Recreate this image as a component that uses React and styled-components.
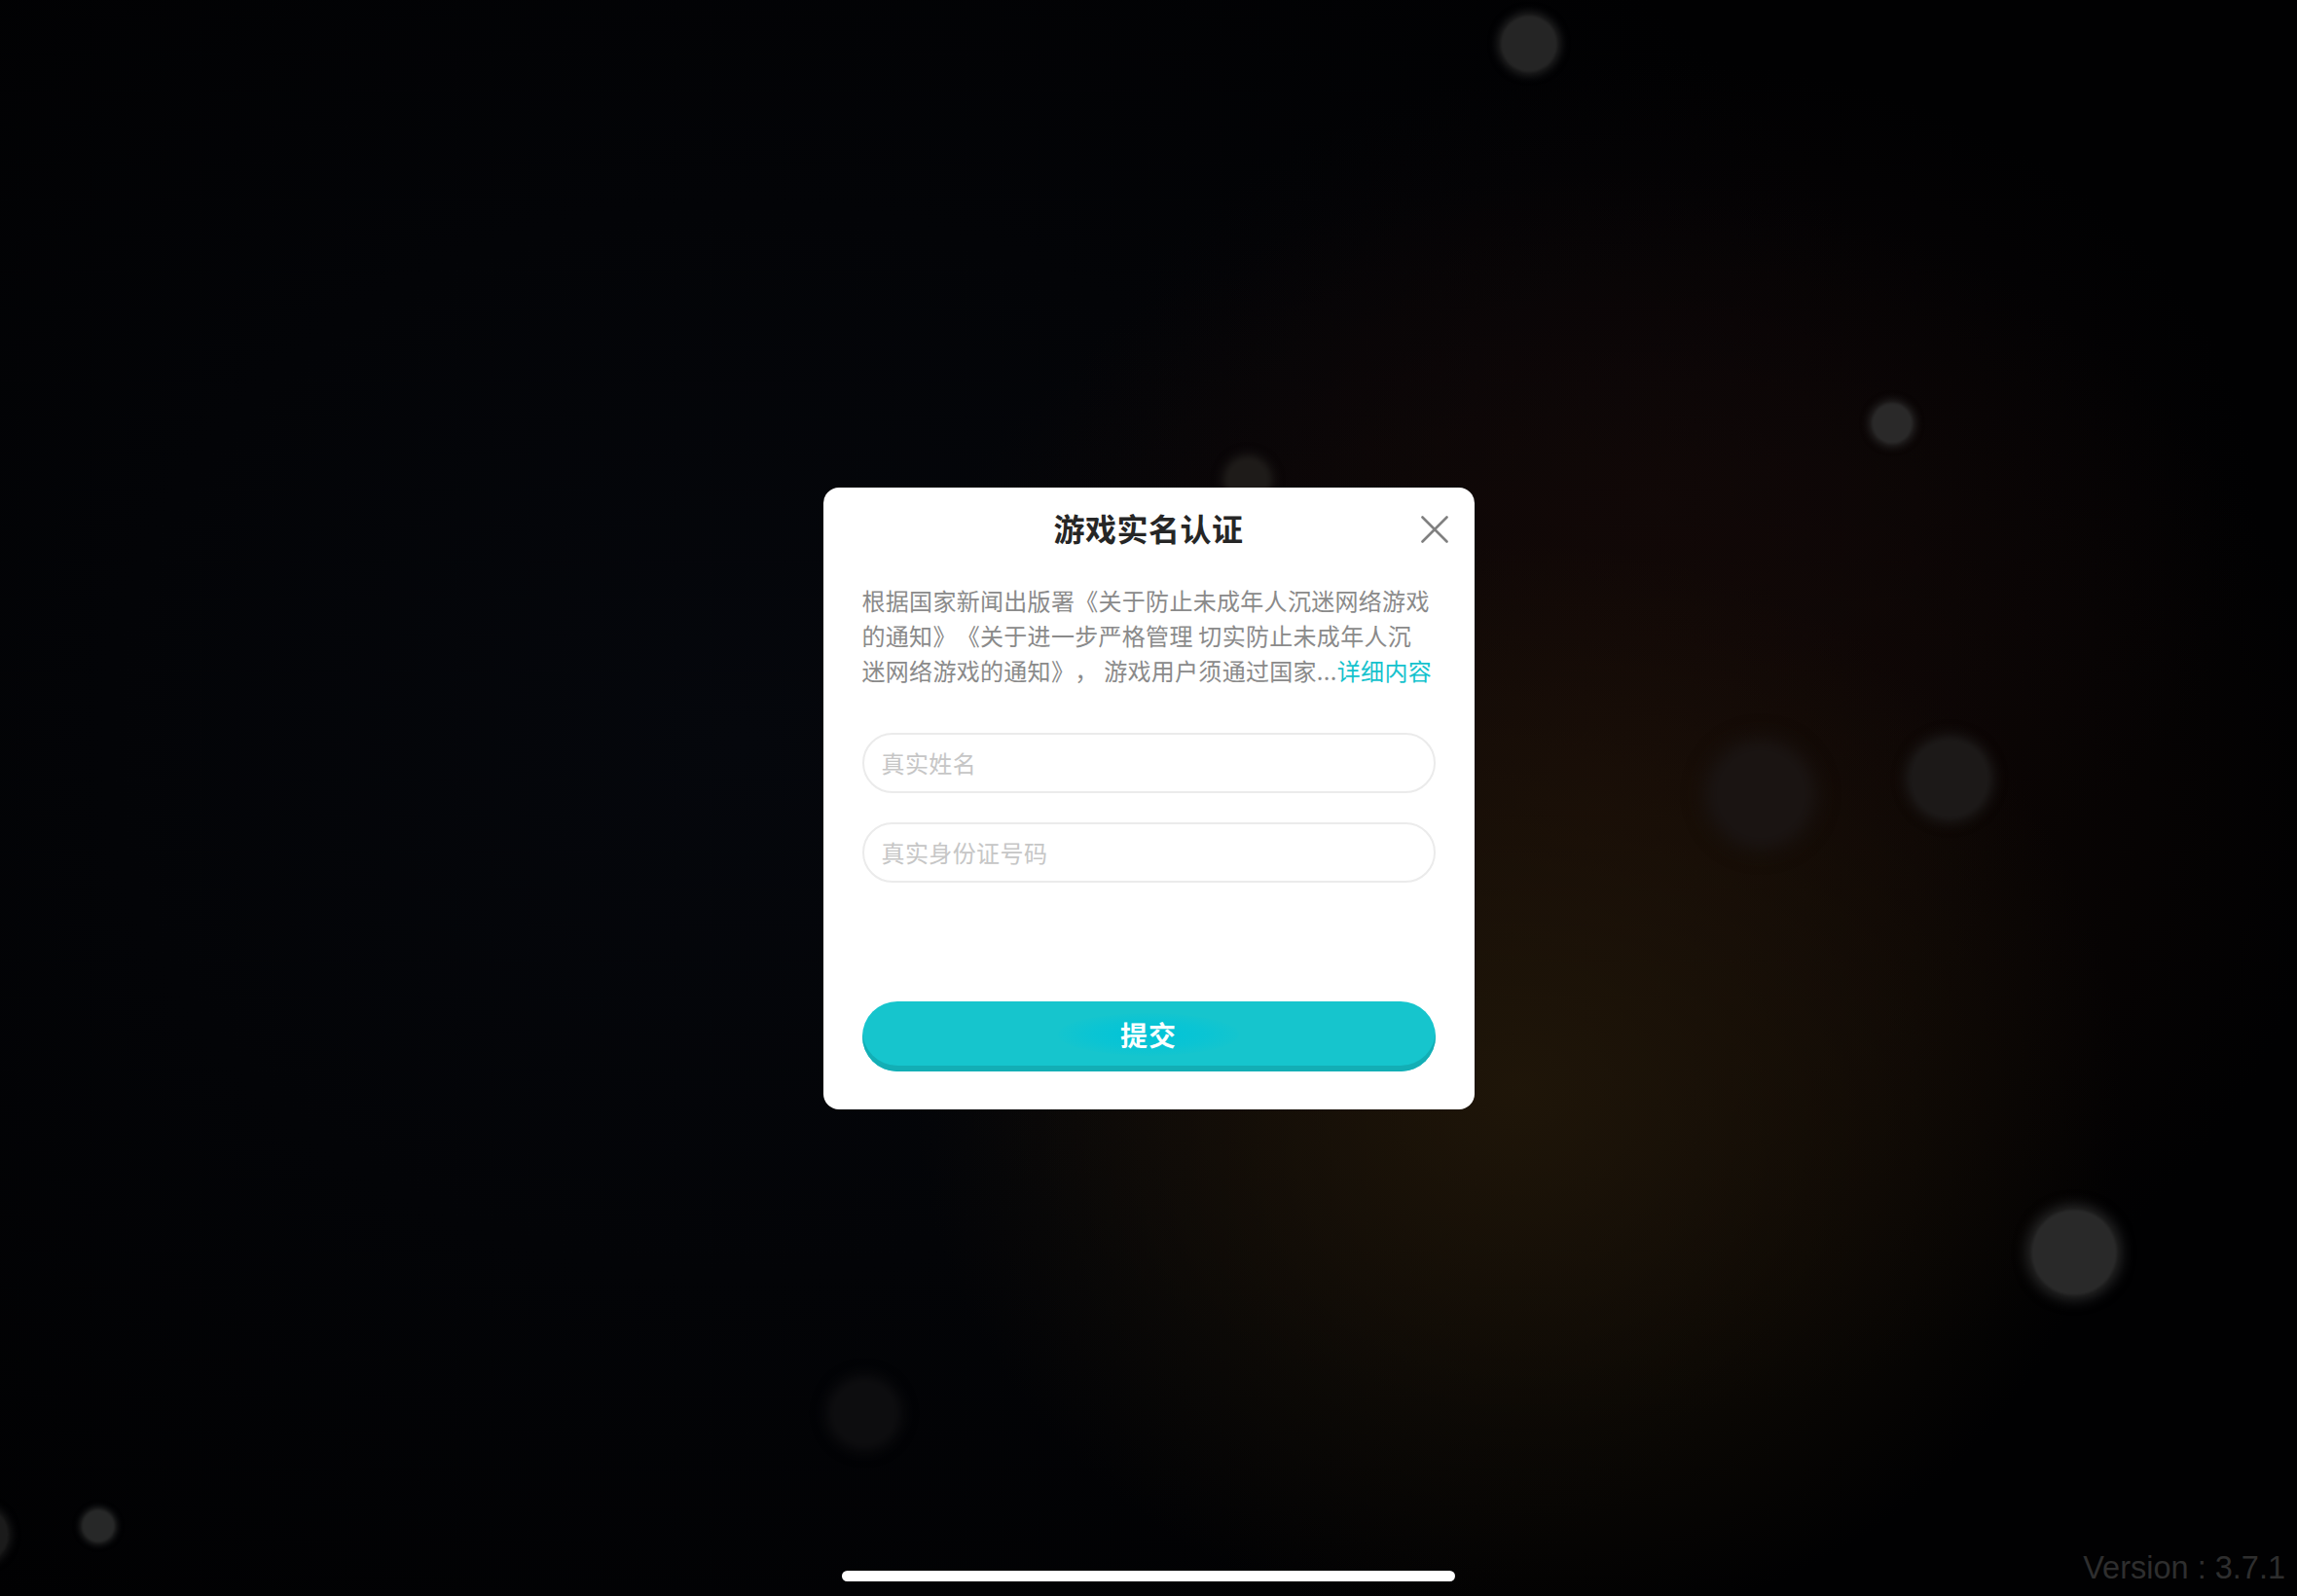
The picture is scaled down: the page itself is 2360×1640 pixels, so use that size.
import styled, { createGlobalStyle } from "styled-components";

const GlobalStyle = createGlobalStyle`
  html, body {
    margin: 0;
    padding: 0;
    background: #010102;
    overflow: hidden;
  }
  * {
    box-sizing: border-box;
  }
`;

const cjk = `"Noto Sans CJK SC", "Noto Sans", sans-serif`;

const Screen = styled.div`
  position: relative;
  width: 2360px;
  height: 1640px;
  overflow: hidden;
  display: grid;
  grid-template-rows: 1fr auto 1fr;
  grid-template-columns: 1fr;
  background:
    radial-gradient(ellipse 620px 560px at 1560px 1120px, rgba(34, 24, 9, 0.85), rgba(30, 20, 8, 0) 100%),
    radial-gradient(ellipse 760px 640px at 1640px 820px, rgba(22, 10, 6, 0.9), rgba(20, 8, 6, 0) 100%),
    radial-gradient(ellipse 620px 460px at 1700px 520px, rgba(14, 7, 9, 0.8), rgba(14, 7, 9, 0) 100%),
    radial-gradient(ellipse 1300px 1100px at 760px 760px, #05070c, rgba(4, 6, 10, 0) 100%),
    #010102;
`;

const Bokeh = styled.span`
  position: absolute;
  left: ${(p) => p.$x - p.$r}px;
  top: ${(p) => p.$y - p.$r}px;
  width: ${(p) => p.$r * 2}px;
  height: ${(p) => p.$r * 2}px;
  border-radius: 50%;
  background: ${(p) => p.$c};
  box-shadow: 0 0 ${(p) => p.$glow}px ${(p) => p.$glow / 3}px ${(p) => p.$c};
  filter: blur(${(p) => p.$blur}px);
`;

const bokehs = [
  { x: 1571, y: 45, r: 29, c: "#252525", glow: 10, blur: 1 },
  { x: 1944, y: 435, r: 21, c: "#2a2929", glow: 8, blur: 1 },
  { x: 1282, y: 493, r: 23, c: "#1e1b19", glow: 10, blur: 2 },
  { x: 1809, y: 816, r: 52, c: "#1a1412", glow: 18, blur: 5 },
  { x: 2003, y: 800, r: 42, c: "#1c1918", glow: 12, blur: 2 },
  { x: 2131, y: 1287, r: 44, c: "#292929", glow: 14, blur: 1 },
  { x: 888, y: 1452, r: 36, c: "#0d0d0f", glow: 12, blur: 3 },
  { x: 101, y: 1568, r: 17, c: "#272828", glow: 6, blur: 1 },
  { x: -20, y: 1577, r: 29, c: "#1b1b1b", glow: 8, blur: 1 },
];

const Modal = styled.div`
  grid-row: 2;
  justify-self: center;
  position: relative;
  z-index: 1;
  width: 669px;
  background: #ffffff;
  border-radius: 16px;
  padding: 0 40px 39px;
  display: flex;
  flex-direction: column;
  font-family: ${cjk};
`;

const ModalHeader = styled.div`
  height: 82px;
  display: grid;
  grid-template-columns: 1fr auto 1fr;
  align-items: center;
`;

const Title = styled.h2`
  grid-column: 2;
  margin: 0;
  font-size: 32px;
  line-height: 1;
  font-weight: 700;
  letter-spacing: 0.5px;
  color: #262626;
`;

const CloseButton = styled.button`
  grid-column: 3;
  justify-self: end;
  margin: 4px -13px 0 0;
  width: 28px;
  height: 28px;
  padding: 0;
  border: none;
  background: none;
  cursor: pointer;
  display: flex;
  svg {
    display: block;
  }
`;

const Notice = styled.p`
  margin: 16px 0 0;
  font-size: 24px;
  line-height: 36px;
  letter-spacing: 0.3px;
  color: #8a8a8a;
  white-space: nowrap;
  text-spacing-trim: space-all;
`;

const MoreLink = styled.a`
  color: #14c2cd;
  text-decoration: none;
`;

const Fields = styled.div`
  margin-top: 46px;
  display: flex;
  flex-direction: column;
  gap: 30px;
`;

const Field = styled.input`
  width: 100%;
  height: 62px;
  border: 2px solid #ebebeb;
  border-radius: 31px;
  padding: 0 18px;
  font-family: ${cjk};
  font-size: 24px;
  letter-spacing: 0.4px;
  color: #333;
  background: #fff;
  outline: none;
  &::placeholder {
    color: #c6c6c6;
  }
`;

const SubmitButton = styled.button`
  margin-top: 122px;
  height: 72px;
  border: none;
  border-radius: 36px;
  background: #16c5cd;
  box-shadow: inset 0 -6px 0 #13aeb5;
  display: flex;
  align-items: center;
  justify-content: center;
  padding: 0 0 4px;
  cursor: pointer;
`;

const SubmitLabel = styled.span`
  padding: 6px 64px;
  border-radius: 50%;
  background: radial-gradient(ellipse at center, rgba(0, 196, 216, 1) 0%, rgba(6, 196, 214, 0.7) 45%, rgba(22, 197, 205, 0) 75%);
  font-family: ${cjk};
  font-size: 28px;
  font-weight: 700;
  line-height: 32px;
  letter-spacing: 1px;
  color: #ffffff;
`;

const Footer = styled.div`
  grid-row: 3;
  align-self: end;
  display: grid;
  grid-template-columns: 1fr 630px 1fr;
  align-items: end;
  padding: 0 12px 13px;
`;

const HomeIndicator = styled.div`
  grid-column: 2;
  height: 11px;
  margin-bottom: 2px;
  border-radius: 6px;
  background: #ffffff;
`;

const VersionLabel = styled.span`
  grid-column: 3;
  justify-self: end;
  font-family: "Liberation Sans", Arial, sans-serif;
  font-size: 32.5px;
  line-height: 32px;
  color: #2e2e2e;
`;

function CloseIcon() {
  return (
    <svg width="28" height="28" viewBox="0 0 28 28">
      <path
        d="M1.5 1.5 L26.5 26.5 M26.5 1.5 L1.5 26.5"
        stroke="#808080"
        strokeWidth="2.6"
        strokeLinecap="round"
        fill="none"
      />
    </svg>
  );
}

export default function App() {
  return (
    <>
      <GlobalStyle />
      <Screen>
        {bokehs.map((b, i) => (
          <Bokeh key={i} $x={b.x} $y={b.y} $r={b.r} $c={b.c} $glow={b.glow} $blur={b.blur} />
        ))}

        <Modal>
          <ModalHeader>
            <Title>游戏实名认证</Title>
            <CloseButton aria-label="关闭">
              <CloseIcon />
            </CloseButton>
          </ModalHeader>

          <Notice>
            根据国家新闻出版署《关于防止未成年人沉迷网络游戏
            <br />
            的通知》《关于进一步严格管理 切实防止未成年人沉
            <br />
            迷网络游戏的通知》， 游戏用户须通过国家...
            <MoreLink href="#">详细内容</MoreLink>
          </Notice>

          <Fields>
            <Field type="text" placeholder="真实姓名" />
            <Field type="text" placeholder="真实身份证号码" />
          </Fields>

          <SubmitButton>
            <SubmitLabel>提交</SubmitLabel>
          </SubmitButton>
        </Modal>

        <Footer>
          <HomeIndicator />
          <VersionLabel>Version : 3.7.1</VersionLabel>
        </Footer>
      </Screen>
    </>
  );
}
